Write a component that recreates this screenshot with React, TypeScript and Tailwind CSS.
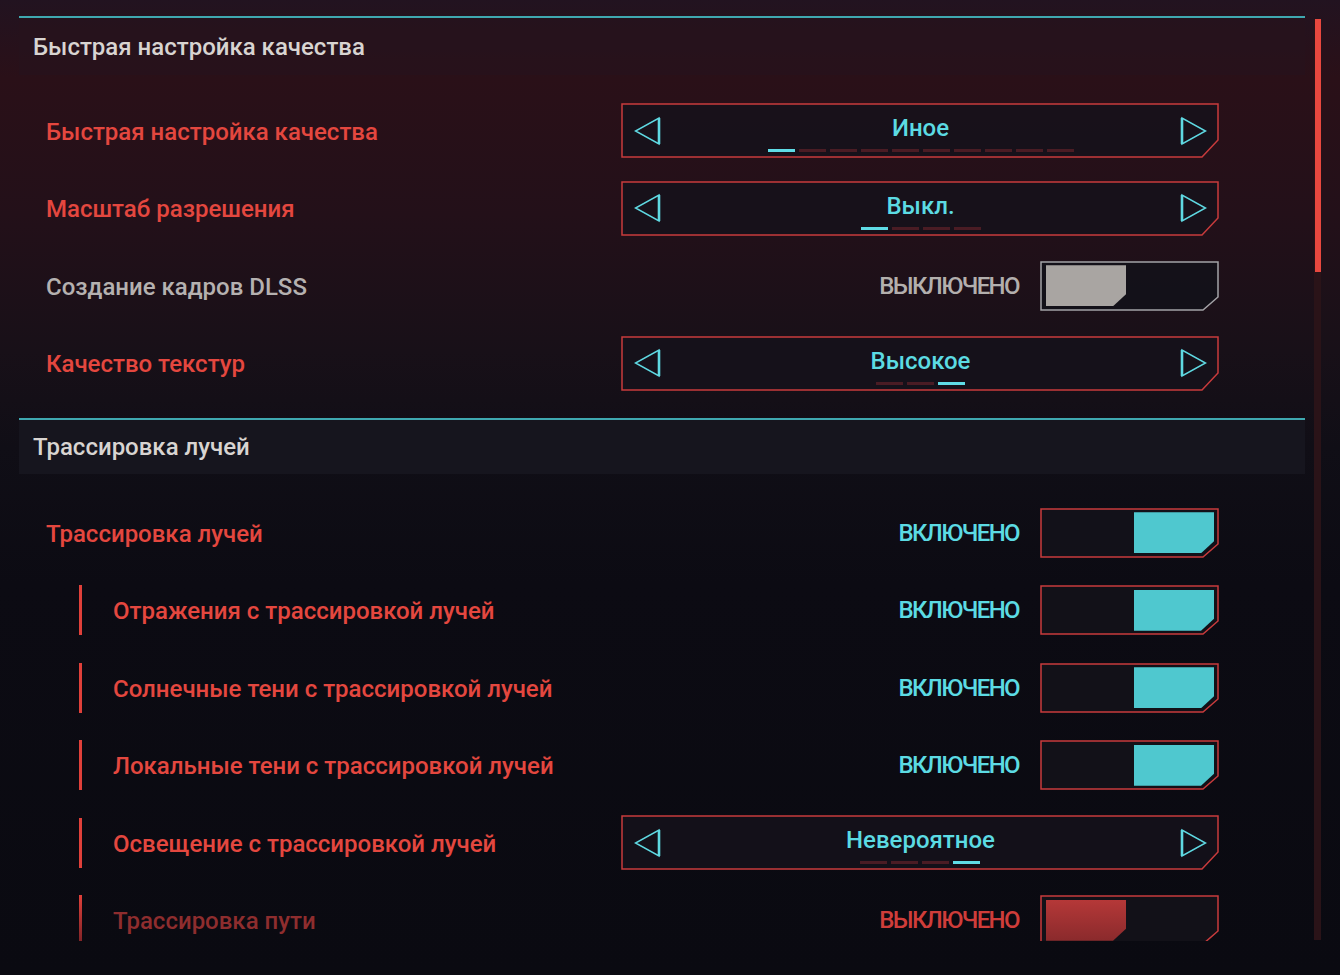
import React from "react";

const FONT = "font-['Roboto','Liberation_Sans',sans-serif]";

function LeftArrow() {
  return (
    <svg width="28" height="30" viewBox="0 0 28 30" className="shrink-0">
      <polygon points="25,2 25,28 1.5,15" fill="none" stroke="#5fd9e2" strokeWidth="1.5" strokeLinejoin="miter" />
      <line x1="25" y1="2" x2="25" y2="28" stroke="#5fd9e2" strokeWidth="2.6" />
    </svg>
  );
}

function RightArrow() {
  return (
    <svg width="28" height="30" viewBox="0 0 28 30" className="shrink-0">
      <polygon points="3,2 3,28 26.5,15" fill="none" stroke="#5fd9e2" strokeWidth="1.5" strokeLinejoin="miter" />
      <line x1="3" y1="2" x2="3" y2="28" stroke="#5fd9e2" strokeWidth="2.6" />
    </svg>
  );
}

function Selector({ value, count, active }: { value: string; count: number; active: number }) {
  const segs = Array.from({ length: count }, (_, i) => i);
  return (
    <div className="relative h-[55px] w-[598px] shrink-0">
      <svg className="absolute inset-0" width="598" height="55" viewBox="0 0 598 55">
        <polygon
          points="1,1 597,1 597,37 581,54 1,54"
          fill="#15121b"
          fillOpacity="0.85"
          stroke="#c83b3c"
          strokeWidth="1.5"
        />
      </svg>
      <div className="relative flex h-full items-center justify-between pl-[13px] pr-[12px]">
        <LeftArrow />
        <div className="flex flex-col items-center pt-[5px]">
          <span className="text-[24px] font-medium leading-[28px] text-[#5cdbe3]">{value}</span>
          <div className="mt-[7px] flex gap-[4px]">
            {segs.map((i) => (
              <div
                key={i}
                className={i === active ? "h-[3px] w-[27px] bg-[#5fdce6]" : "h-[3px] w-[27px] bg-[#4a1c24]"}
              />
            ))}
          </div>
        </div>
        <RightArrow />
      </div>
    </div>
  );
}

type TState = "offGrey" | "on" | "offRed";

function Toggle({ state }: { state: TState }) {
  const stroke = state === "offGrey" ? "#a3a2a6" : "#c83b3c";
  const knob =
    state === "offGrey"
      ? "bg-[#a9a5a2]"
      : state === "on"
      ? "bg-[#4fc8cf]"
      : "bg-[linear-gradient(180deg,#b53838,#8a2a2c)]";
  return (
    <div className="relative h-[50px] w-[179px] shrink-0">
      <svg className="absolute inset-0" width="179" height="50" viewBox="0 0 179 50">
        <polygon
          points="1,1 178,1 178,36 163,49 1,49"
          fill="#131219"
          fillOpacity="0.9"
          stroke={stroke}
          strokeWidth="1.5"
        />
      </svg>
      <div
        className={
          state === "on"
            ? "relative flex h-full items-center justify-end pr-[5px]"
            : "relative flex h-full items-center justify-start pl-[6px]"
        }
      >
        <div
          className={
            "h-[41px] w-[80px] [clip-path:polygon(0_0,100%_0,100%_calc(100%-12px),calc(100%-13px)_100%,0_100%)] " +
            knob
          }
        />
      </div>
    </div>
  );
}

function StateText({ state }: { state: TState }) {
  const cls =
    state === "offGrey" ? "text-[#b3afad]" : state === "on" ? "text-[#5cdbe3]" : "text-[#cf3d3a]";
  return (
    <span className={"mr-[21px] text-[24px] font-medium leading-none tracking-[-1.6px] " + cls}>
      {state === "on" ? "ВКЛЮЧЕНО" : "ВЫКЛЮЧЕНО"}
    </span>
  );
}

function Row({
  label,
  labelClass = "text-[#e4473f]",
  sub = false,
  dim = false,
  children,
}: {
  label: string;
  labelClass?: string;
  sub?: boolean;
  dim?: boolean;
  children: React.ReactNode;
}) {
  return (
    <div className="flex h-[77.5px] items-center pl-[27px] pr-[86px]">
      {sub && (
        <div
          className={
            dim
              ? "ml-[33px] mr-[31px] h-[50px] w-[3px] shrink-0 bg-[linear-gradient(180deg,#e0403a,#7a2226)]"
              : "ml-[33px] mr-[31px] h-[50px] w-[3px] shrink-0 bg-[#e0403a]"
          }
        />
      )}
      <span className={"flex-1 pt-[2px] text-[24px] font-medium leading-none " + labelClass}>{label}</span>
      <div className="flex items-center">{children}</div>
    </div>
  );
}

export default function App() {
  return (
    <div
      className={
        "flex h-[975px] w-[1340px] overflow-hidden bg-[linear-gradient(180deg,#221320_0%,#2a1018_8%,#231019_22%,#181018_36%,#100e16_46%,#0c0b13_60%,#0a0a11_100%)] " +
        FONT
      }
    >
      <div className="ml-[19px] w-[1286px] shrink-0 pt-[16px]">
        <div className="h-[925px] overflow-hidden">
          {/* Section 1 */}
          <div className="border-t-2 border-[#3fa8b0] bg-[#26131d]/70">
            <div className="flex h-[57px] items-center pl-[14px] text-[24px] font-medium text-[#d8d4d1]">
              Быстрая настройка качества
            </div>
          </div>
          <div className="pb-[16px] pt-[17px]">
            <Row label="Быстрая настройка качества">
              <Selector value="Иное" count={10} active={0} />
            </Row>
            <Row label="Масштаб разрешения">
              <Selector value="Выкл." count={4} active={0} />
            </Row>
            <Row label="Создание кадров DLSS" labelClass="text-[#b5b1b0]">
              <StateText state="offGrey" />
              <Toggle state="offGrey" />
            </Row>
            <Row label="Качество текстур">
              <Selector value="Высокое" count={3} active={2} />
            </Row>
          </div>

          {/* Section 2 */}
          <div className="border-t-2 border-[#3fa8b0] bg-[#16151e]">
            <div className="flex h-[54px] items-center pl-[14px] text-[24px] font-medium text-[#d8d4d1]">
              Трассировка лучей
            </div>
          </div>
          <div className="pt-[20px]">
            <Row label="Трассировка лучей">
              <StateText state="on" />
              <Toggle state="on" />
            </Row>
            <Row label="Отражения с трассировкой лучей" sub>
              <StateText state="on" />
              <Toggle state="on" />
            </Row>
            <Row label="Солнечные тени с трассировкой лучей" sub>
              <StateText state="on" />
              <Toggle state="on" />
            </Row>
            <Row label="Локальные тени с трассировкой лучей" sub>
              <StateText state="on" />
              <Toggle state="on" />
            </Row>
            <Row label="Освещение с трассировкой лучей" sub>
              <Selector value="Невероятное" count={4} active={3} />
            </Row>
            <Row label="Трассировка пути" sub dim labelClass="text-[#8e2d2e]">
              <StateText state="offRed" />
              <Toggle state="offRed" />
            </Row>
          </div>
        </div>
      </div>
      <div className="ml-[9px] w-[7px] shrink-0 pt-[19px]">
        <div className="h-[921px] w-[7px] bg-[#2a1318]">
          <div className="ml-[1px] h-[253px] w-[6px] bg-[#e8483f]" />
        </div>
      </div>
    </div>
  );
}
